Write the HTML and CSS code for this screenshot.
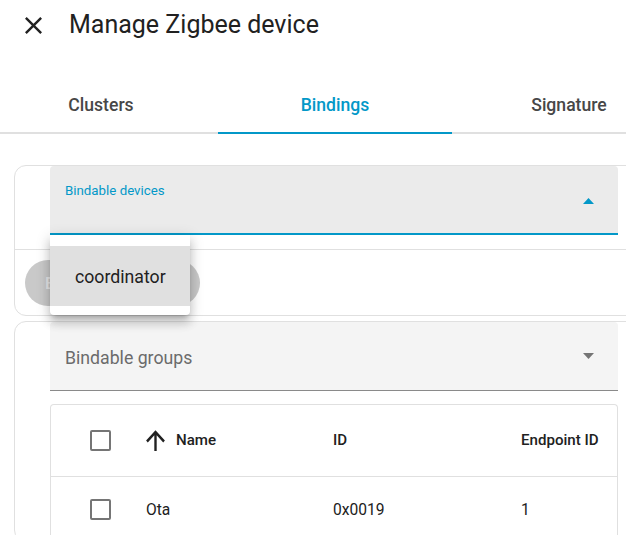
FILE: index.html
```html
<!DOCTYPE html>
<html>
<head>
<meta charset="utf-8">
<link rel="stylesheet" href="styles.css">
</head>
<body>
<div class="dialog">
  <header class="head">
    <svg class="close" viewBox="5 5 14 14"><path d="M19,6.41L17.59,5L12,10.59L6.41,5L5,6.41L10.59,12L5,17.59L6.41,19L12,13.41L17.59,19L19,17.59L13.41,12L19,6.41Z" fill="#212121"/></svg>
    <h2 class="title">Manage Zigbee device</h2>
  </header>
  <nav class="tabs">
    <div class="tab">Clusters</div>
    <div class="tab active">Bindings</div>
    <div class="tab">Signature</div>
  </nav>
  <div class="content">
    <section class="card">
      <div class="select focused">
        <span class="float-label">Bindable devices</span>
        <svg class="caret" viewBox="0 0 11 6"><polygon points="0,6 5.5,0 11,6" fill="#0398c8"/></svg>
        <div class="menu">
          <div class="menu-item">coordinator</div>
        </div>
      </div>
      <div class="actions">
        <div class="bind">Bind</div>
      </div>
    </section>
    <section class="card second">
      <div class="select plain">
        <span class="label">Bindable groups</span>
        <svg class="caret" viewBox="0 0 11 6"><polygon points="0,0 11,0 5.5,6" fill="#757575"/></svg>
      </div>
      <div class="table">
        <div class="row header">
          <div class="cell"><span class="checkbox"></span></div>
          <div class="cell name"><svg class="sort" viewBox="4 4 16 16" preserveAspectRatio="none"><path d="M13,20H11V8L5.5,13.5L4.08,12.08L12,4.16L19.92,12.08L18.5,13.5L13,8V20Z" fill="#212121"/></svg>Name</div>
          <div class="cell">ID</div>
          <div class="cell">Endpoint ID</div>
        </div>
        <div class="row body">
          <div class="cell"><span class="checkbox"></span></div>
          <div class="cell">Ota</div>
          <div class="cell">0x0019</div>
          <div class="cell">1</div>
        </div>
      </div>
    </section>
  </div>
</div>
</body>
</html>
```
FILE: styles.css
```css
* { box-sizing: border-box; }
html, body { margin: 0; padding: 0; background: #fff; }
body {
  font-family: Roboto, "Noto Sans", sans-serif;
  color: #212121;
  width: 626px;
  height: 535px;
  overflow: hidden;
}
.head {
  height: 48px;
  display: flex;
  align-items: center;
  padding-left: 25px;
}
.close { width: 17px; height: 17px; margin-top: 2px; }
.title {
  margin: 0 0 0 27px;
  font-size: 25px;
  font-weight: 400;
  color: #212121;
}
.tabs {
  margin-top: 30px;
  margin-left: -16px;
  width: 642px;
  display: flex;
  align-items: flex-start;
  border-bottom: 2px solid #e0e0e0;
}
.tab {
  flex: 0 0 234px;
  height: 54px;
  padding-bottom: 0;
  display: flex;
  align-items: center;
  justify-content: center;
  font-size: 17.6px;
  font-weight: 500;
  color: #474747;
}
.tab.active {
  color: #0398c8;
  height: 56px;
  margin-bottom: -2px;
  border-bottom: 2px solid #0398c8;
}
.content { padding: 31px 0 0 14px; }
.card {
  width: 640px;
  border: 1px solid #e0e0e0;
  border-radius: 12px;
  background: #fff;
}
.card.second { margin-top: 5px; }
.select {
  position: relative;
  margin: 0 35px;
  height: 69px;
  padding-left: 15px;
  display: flex;
  align-items: center;
  border-radius: 4px 4px 0 0;
}
.select.focused {
  background: #ebebeb;
  border-bottom: 2px solid #0398c8;
  margin-bottom: 14px;
}
.select.plain {
  background: #f4f4f4;
  border-bottom: 1px solid #8a8a8a;
}
.float-label {
  align-self: flex-start;
  margin-top: 17px;
  font-size: 13.3px;
  line-height: 16px;
  color: #0398c8;
}
.label {
  font-size: 17.7px;
  color: #6b6b6b;
  padding-top: 3px;
}
.caret {
  width: 11px;
  height: 6px;
  margin-left: auto;
  margin-right: 24px;
}
.focused .caret { margin-top: 3px; }
.menu {
  position: absolute;
  left: 0;
  top: calc(100% + 2px);
  width: 140px;
  padding: 11px 0 9px;
  background: #fff;
  border-radius: 0 0 4px 4px;
  box-shadow: 0 5px 5px -3px rgba(0,0,0,.2), 0 8px 10px 1px rgba(0,0,0,.14), 0 3px 14px 2px rgba(0,0,0,.12);
  z-index: 2;
}
.menu-item {
  height: 60px;
  display: flex;
  align-items: center;
  padding-left: 25px;
  padding-top: 2px;
  background: #e0e0e0;
  font-size: 17.7px;
  color: #212121;
}
.actions {
  border-top: 1px solid #e0e0e0;
  padding: 10px 10px 9px;
}
.bind {
  width: 175px;
  height: 46px;
  border-radius: 23px;
  background: #c9c9c9;
  color: #e8e8e8;
  font-size: 17px;
  font-weight: 500;
  display: flex;
  align-items: center;
  padding-left: 20px;
}
.table {
  margin: 13px 35px 0;
  border: 1px solid #e0e0e0;
  border-bottom: none;
  border-radius: 4px 4px 0 0;
}
.row {
  display: grid;
  grid-template-columns: 95px 187px 188px 1fr;
  align-items: center;
}
.row.header {
  height: 72px;
  border-bottom: 1px solid #e0e0e0;
  font-weight: 500;
  font-size: 15.1px;
}
.row.header .cell { padding-bottom: 1px; }
.row.body { height: 64px; font-size: 15.6px; }
.row.body .cell { padding-top: 1px; }
.cell { display: flex; align-items: center; white-space: nowrap; }
.checkbox {
  width: 21px;
  height: 21px;
  margin-left: 39px;
  border: 2px solid #757575;
  border-radius: 2px;
}
.sort { width: 19px; height: 21px; margin-right: 11px; }
```
